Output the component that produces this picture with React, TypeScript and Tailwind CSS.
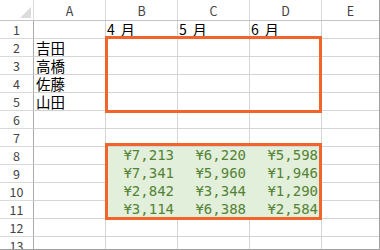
import React from 'react';

type Cell = { text?: React.ReactNode; kind?: 'name' | 'month' | 'money' };

const columns = ['A', 'B', 'C', 'D', 'E'];

const months: Record<number, Cell[]> = {
  1: [{}, { text: '4', kind: 'month' }, { text: '5', kind: 'month' }, { text: '6', kind: 'month' }, {}],
};

const names = ['吉田', '高橋', '佐藤', '山田'];

const sales = [
  ['¥7,213', '¥6,220', '¥5,598'],
  ['¥7,341', '¥5,960', '¥1,946'],
  ['¥2,842', '¥3,344', '¥1,290'],
  ['¥3,114', '¥6,388', '¥2,584'],
];

const rowCells = (row: number): Cell[] => {
  if (months[row]) return months[row];
  if (row >= 2 && row <= 5) return [{ text: names[row - 2], kind: 'name' }, {}, {}, {}, {}];
  if (row >= 8 && row <= 11) {
    const r = sales[row - 8];
    return [{}, { text: r[0], kind: 'money' }, { text: r[1], kind: 'money' }, { text: r[2], kind: 'money' }, {}];
  }
  return [{}, {}, {}, {}, {}];
};

const ColumnHeader: React.FC = () => (
  <div className="flex h-[21px] border-b border-[#c4c4c4]">
    <div className="relative w-[34px] shrink-0 border-r border-[#dadada]">
      {/* select-all corner triangle */}
      <svg className="absolute left-[20px] top-[7px]" width="11" height="11" viewBox="0 0 11 11">
        <polygon points="11,0 11,11 0,11" fill="#dcdcdc" />
      </svg>
    </div>
    {columns.map((c, i) => (
      <div
        key={c}
        className={`flex items-center justify-center text-[12.5px] leading-[14px] text-[#444444] pt-[1px] ${
          i === 4 ? 'flex-1' : 'w-[72px] shrink-0 border-r border-[#dadada]'
        }`}
      >
        {c}
      </div>
    ))}
  </div>
);

const GridRow: React.FC<{ row: number }> = ({ row }) => {
  const cells = rowCells(row);
  const filled = row >= 8 && row <= 11;
  return (
    <div className="flex h-[18px]">
      <div className="flex w-[34px] shrink-0 items-center justify-center border-r border-b border-r-[#ababab] border-b-[#dadada] pt-[1px] text-[12.5px] leading-[14px] text-[#444444]">
        {row}
      </div>
      {cells.map((cell, i) => {
        const green = filled && i >= 1 && i <= 3;
        const base = i === 4 ? 'flex-1 border-b' : 'w-[72px] shrink-0 border-r border-b';
        const color = green ? 'bg-[#e2efda] border-[#e2efda]' : 'border-[#d4d4d4]';
        let content: React.ReactNode = null;
        if (cell.kind === 'name') {
          content = <span className="pb-[1px] pl-[2px] text-[14.5px] leading-[15px] text-black">{cell.text}</span>;
        } else if (cell.kind === 'month') {
          content = (
            <span className="pb-[1px] pl-[1px] text-[14px] leading-[15px] text-black">
              <span className="mr-[6px]">{cell.text}</span>月
            </span>
          );
        } else if (cell.kind === 'money') {
          content = (
            <span className="ml-auto pb-[1px] pr-[3px] font-['DejaVu_Sans_Mono',monospace] text-[14px] leading-[15px] text-[#548235]">
              {cell.text}
            </span>
          );
        }
        return (
          <div key={i} className={`flex items-end ${base} ${color}`}>
            {content}
          </div>
        );
      })}
    </div>
  );
};

export default function App() {
  const rows = Array.from({ length: 13 }, (_, i) => i + 1);
  return (
    <div className="relative h-[250px] w-[380px] overflow-hidden border-r border-b border-[#a0a0a0] bg-white font-['Noto_Sans_CJK_JP','Liberation_Sans',sans-serif]">
      <ColumnHeader />
      {rows.map((r) => (
        <GridRow key={r} row={r} />
      ))}
      {/* highlighted ranges */}
      <div className="absolute left-[105px] top-[36px] h-[77px] w-[217px] border-[3px] border-[#f1642b]" />
      <div className="absolute left-[105px] top-[143px] h-[77px] w-[217px] border-[3px] border-[#f1642b]" />
    </div>
  );
}
